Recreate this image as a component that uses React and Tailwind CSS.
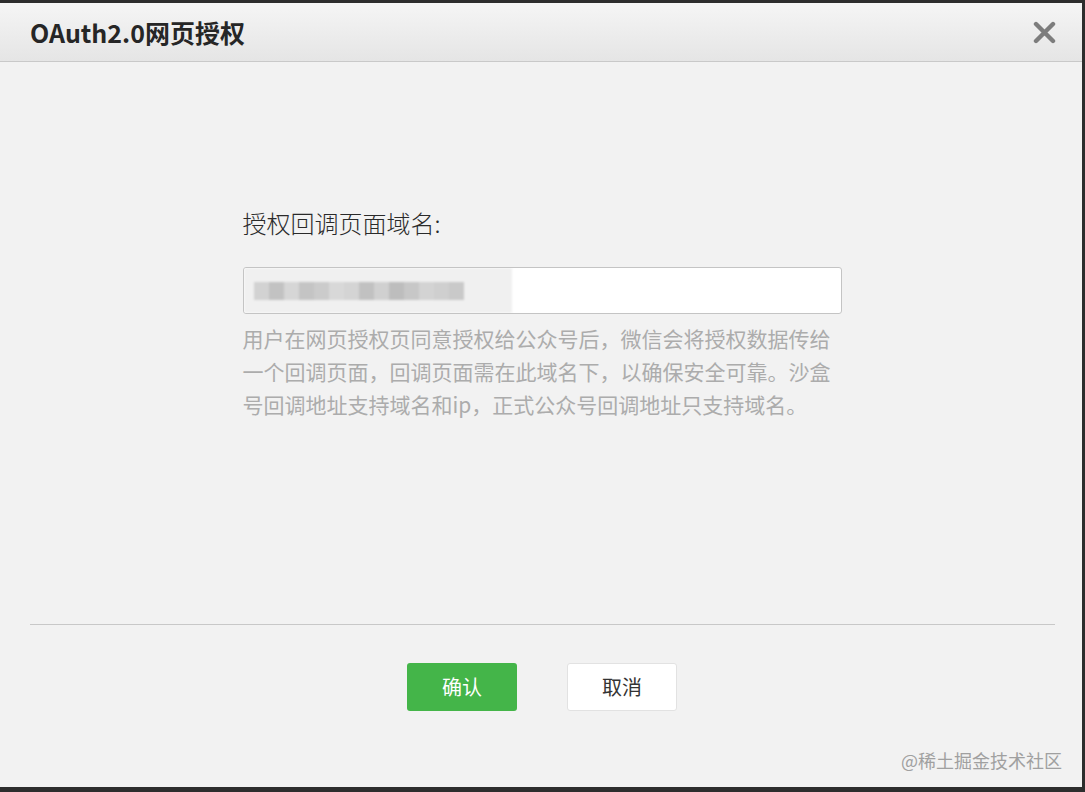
import React from "react";

const blocks = ["#d2d2d2","#c2c2c2","#d6d6d6","#c4c4c4","#cbcbcb","#d8d8d8","#d4d4d4","#c1c1c1","#d0d0d0","#bdbdbd","#c7c7c7","#d3d3d3","#cfcfcf","#c9c9c9"];

export default function App() {
  const font = { fontFamily: '"Noto Sans CJK SC", "Noto Sans", sans-serif' };
  return (
    <div className="w-[1085px] h-[792px] bg-[#2d2d2d] pt-[3px] pr-[3px] pb-[5px]" style={font}>
      <div className="h-full bg-[#f2f2f2] flex flex-col">
        {/* header */}
        <div className="h-[59px] shrink-0 flex items-center justify-between pl-[30px] pr-[26px] border-b border-[#c9c9c9] bg-gradient-to-b from-[#f5f5f5] to-[#e5e5e5]">
          <div className="text-[25px] font-bold text-[#262626] leading-none">OAuth2.0网页授权</div>
          <svg width="23" height="23" viewBox="0 0 23 23">
            <path d="M3 3 L20 20 M20 3 L3 20" stroke="#7d7d7d" strokeWidth="4.4" strokeLinecap="round" />
          </svg>
        </div>
        {/* body */}
        <div className="flex-1 flex justify-center">
          <div className="w-[599px] ml-[2px] pt-[146px]">
            <div className="text-[24px] leading-[30px] text-[#2a2a2a] font-light">授权回调页面域名:</div>
            <div className="mt-[29px] h-[47px] bg-white border border-[#c4c4c4] rounded-[3px] flex items-center overflow-hidden">
              <div className="h-full w-[268px] bg-[#f0f0f0] flex items-center pl-[10px] blur-[1px]">
                <div className="flex h-[18px]">
                  {blocks.map((c, i) => (
                    <div key={i} className="w-[15px] h-full" style={{ backgroundColor: c }} />
                  ))}
                </div>
              </div>
            </div>
            <div className="mt-[8px] text-[21px] leading-[33px] text-[#acacac] whitespace-nowrap">
              <div>用户在网页授权页同意授权给公众号后，微信会将授权数据传给</div>
              <div>一个回调页面，回调页面需在此域名下，以确保安全可靠。沙盒</div>
              <div>号回调地址支持域名和ip，正式公众号回调地址只支持域名。</div>
            </div>
          </div>
        </div>
        {/* divider */}
        <div className="ml-[30px] mr-[27px] h-px bg-[#c8c8c8]" />
        {/* footer */}
        <div className="h-[162px] shrink-0 flex flex-col">
          <div className="pt-[38px] flex justify-center gap-[50px] pl-[2px]">
            <button className="w-[110px] h-[48px] rounded-[3px] bg-[#44b549] text-white text-[20px]">确认</button>
            <button className="w-[110px] h-[48px] rounded-[3px] bg-white border border-[#e2e2e2] text-[#333] text-[20px]">取消</button>
          </div>
          <div className="mt-auto pb-[15px] pr-[20px] text-right text-[18px] text-[#a0a0a0] leading-[24px]">@稀土掘金技术社区</div>
        </div>
      </div>
    </div>
  );
}
